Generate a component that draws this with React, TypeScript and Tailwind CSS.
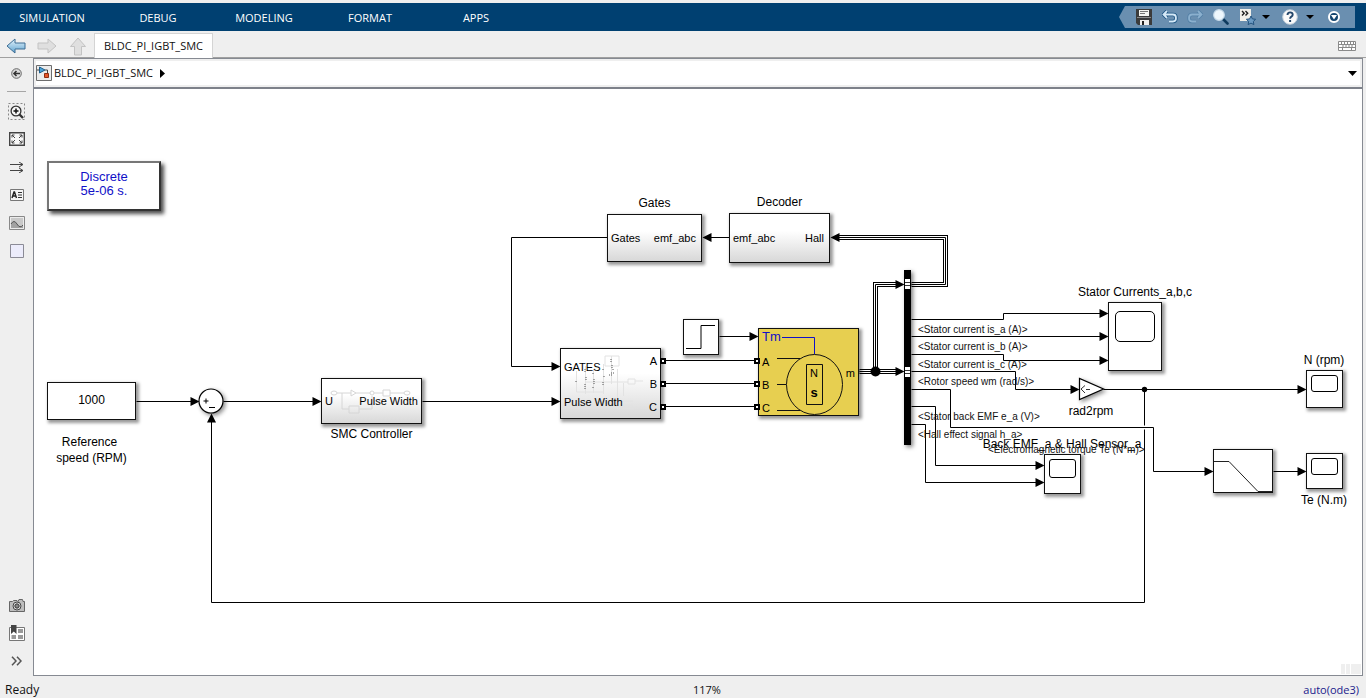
import type { ReactNode } from "react";
import clsx from "clsx";

const MENUS = ["SIMULATION", "DEBUG", "MODELING", "FORMAT", "APPS"];
const MODEL_NAME = "BLDC_PI_IGBT_SMC";

const UI_FONT = "font-['Open_Sans','Noto_Sans',sans-serif]";
const CANVAS_FONT = "font-['Liberation_Sans',Arial,sans-serif]";

type IconButtonProps = {
  label: string;
  className?: string;
  children: ReactNode;
};

function IconButton({ label, className, children }: IconButtonProps) {
  return (
    <button
      type="button"
      aria-label={label}
      className={clsx("flex shrink-0 items-center justify-center", className)}
    >
      {children}
    </button>
  );
}

/* ---------- toolstrip ---------- */

function QuickAccess() {
  return (
    <div className="flex h-[22px] items-center bg-[#6a8fb0] pr-[11px] pl-[13px] [clip-path:polygon(6px_0,100%_0,100%_100%,6px_100%,0_50%)]">
      <IconButton label="Save" className="w-[24px]">
        <svg width="16" height="16" viewBox="0 0 16 16">
          <path d="M0 0h16v16H2l-2-2z" fill="#3b3b3b" />
          <path d="M3 1h10v6H3z" fill="#f4f4f0" />
          <path d="M4 2.500h8M4 4.500h5" stroke="#777" />
          <path d="M1 8.500h14" stroke="#8a8a8a" />
          <path d="M4 11h9v5H4z" fill="#eee" />
          <path d="M6 12h2v4H6z" fill="#222" />
        </svg>
      </IconButton>
      <IconButton label="Undo" className="w-[28px]">
        <svg width="16" height="14" viewBox="0 0 16 14" fill="none">
          <path d="M5 1L1.500 4.500L5 8M2 4.500h9q3 0 3 3.500t-3 3.500H7" stroke="#1f5684" strokeWidth="3.500" />
          <path d="M5 1L1.500 4.500L5 8M2 4.500h9q3 0 3 3.500t-3 3.500H7" stroke="#d5e9f8" strokeWidth="1.800" />
        </svg>
      </IconButton>
      <IconButton label="Redo" className="w-[22px]">
        <svg width="16" height="14" viewBox="0 0 16 14" fill="none">
          <path d="M11 1l3.500 3.500L11 8M14 4.500H5q-3 0-3 3.500t3 3.500h4" stroke="#5480a6" strokeWidth="3.500" />
          <path d="M11 1l3.500 3.500L11 8M14 4.500H5q-3 0-3 3.500t3 3.500h4" stroke="#8bb0ce" strokeWidth="1.800" />
        </svg>
      </IconButton>
      <IconButton label="Find" className="w-[30px]">
        <svg width="16" height="16" viewBox="0 0 16 16">
          <path d="M9.500 9.500l5 5" stroke="#0e3a5e" strokeWidth="2.600" strokeLinecap="round" />
          <circle cx="6" cy="6" r="5.300" fill="#eef7fd" stroke="#c9dcea" strokeWidth="1.200" />
        </svg>
      </IconButton>
      <IconButton label="Favorites" className="w-[22px]">
        <svg width="17" height="16" viewBox="0 0 17 16">
          <path d="M1 0h11v12H1z" fill="#f3f1ea" />
          <path d="M3 2l2.200 2.200L3 6.500M6.500 2l2.200 2.200-2.200 2.300" fill="none" stroke="#222" strokeWidth="1.400" />
          <path d="M12 7l1.400 2.900 3.200.4-2.300 2.200.6 3.100-2.900-1.500-2.900 1.500.6-3.100-2.300-2.200 3.200-.4z" fill="#6c9bc4" stroke="#24547f" />
        </svg>
      </IconButton>
      <IconButton label="Favorites menu" className="w-[16px]">
        <svg width="8" height="4" viewBox="0 0 8 4">
          <path d="M0 0h8L4 4z" />
        </svg>
      </IconButton>
      <IconButton label="Help" className="w-[32px]">
        <svg width="16" height="16" viewBox="0 0 16 16">
          <circle cx="8" cy="8" r="7.300" fill="#fafafa" stroke="#c4d0da" />
          <path d="M5.500 6q0-2.600 2.600-2.600T10.700 5.800q0 1-1.300 1.800T8.100 9.800" fill="none" stroke="#23466a" strokeWidth="1.900" />
          <path d="M7.100 11h2v2h-2z" fill="#23466a" />
        </svg>
      </IconButton>
      <IconButton label="Help menu" className="w-[8px]">
        <svg width="8" height="4" viewBox="0 0 8 4">
          <path d="M0 0h8L4 4z" />
        </svg>
      </IconButton>
      <IconButton label="Minimize toolstrip" className="ml-[10px] w-[20px]">
        <svg width="12" height="12" viewBox="0 0 12 12">
          <circle cx="6" cy="6" r="5" fill="#14456f" stroke="#fff" strokeWidth="2" />
          <path d="M3 4h6L6 8.500z" fill="#fff" />
        </svg>
      </IconButton>
    </div>
  );
}

function Toolstrip() {
  return (
    <header className="flex h-[28px] items-center justify-between bg-[#004071] pr-[11px]">
      <nav className="flex pt-[2px] text-[11px] text-white">
        {MENUS.map((menu) => (
          <button key={menu} type="button" className="w-[106px] pr-[2px] text-center">
            {menu}
          </button>
        ))}
      </nav>
      <QuickAccess />
    </header>
  );
}

/* ---------- tabs and palette ---------- */

function TabBar() {
  return (
    <div className="flex h-[27px] items-end justify-between border-b border-[#a0a0a0]">
      <div className="flex h-full items-end">
        <IconButton label="Back" className="h-[22px] w-[31px]">
          <svg width="20" height="16" viewBox="0 0 20 16">
            <defs>
              <linearGradient id="back" x2="0" y2="1">
                <stop stopColor="#e6f4fc" />
                <stop offset="1" stopColor="#5ea3d0" />
              </linearGradient>
            </defs>
            <path d="M1 8l8-7v4h10v6H9v4z" fill="url(#back)" stroke="#3d6d94" />
          </svg>
        </IconButton>
        <IconButton label="Forward" className="h-[22px] w-[31px]">
          <svg width="20" height="16" viewBox="0 0 20 16">
            <path d="M19 8l-8-7v4H1v6h10v4z" fill="#dfdfdf" stroke="#c3c3c3" />
          </svg>
        </IconButton>
        <IconButton label="Up to parent" className="h-[22px] w-[32px]">
          <svg width="18" height="19" viewBox="0 0 18 19">
            <path d="M9 1l7.500 8.500h-4V18h-7V9.500h-4z" fill="#dfdfdf" stroke="#c3c3c3" />
          </svg>
        </IconButton>
        <button
          type="button"
          className="-mb-px h-[25px] border border-b-0 border-[#d4d4d4] bg-white px-[9px] text-[11px]"
        >
          {MODEL_NAME}
        </button>
      </div>
      <IconButton label="Keyboard shortcuts" className="mr-[10px] mb-[6px]">
        <svg width="18" height="10" viewBox="0 0 18 10" fill="none" stroke="#8a8a8a">
          <path d="M.5.500h17v9H.500z" fill="#fff" />
          <path d="M1 3.500h16M1 6.500h16M3.500 1v2M6.500 1v2M9.500 1v2M12.500 1v2M15.500 1v2M5 4v2M8 4v2M11 4v2M14 4v2M4.500 7v2M13.500 7v2" />
        </svg>
      </IconButton>
    </div>
  );
}

function Palette() {
  return (
    <aside className="flex w-[33px] shrink-0 flex-col items-stretch py-px">
      <IconButton label="Hide browser" className="h-7">
        <svg width="11" height="11" viewBox="0 0 11 11" fill="none">
          <circle cx="5.500" cy="5.500" r="4.800" fill="#ddd" stroke="#666" />
          <path d="M9 5.500H3.500M5.500 3L3 5.500L5.500 8" stroke="#333" strokeWidth="1.600" />
        </svg>
      </IconButton>
      <div className="mx-[7px] mt-1 mb-[5px] h-px bg-[#a6a6a6]" />
      <IconButton label="Zoom" className="h-7">
        <svg width="17" height="17" viewBox="0 0 17 17" fill="none">
          <path d="M.5.500h16v16H.500z" stroke="#888" strokeDasharray="2 2" />
          <path d="M11.500 11.500l3.500 3.500" stroke="#333" strokeWidth="2.400" />
          <circle cx="8" cy="8" r="4.900" fill="#f6f6f6" stroke="#333" strokeWidth="1.300" />
          <path d="M5.500 8h5M8 5.500v5" stroke="#111" strokeWidth="1.500" />
        </svg>
      </IconButton>
      <IconButton label="Fit to view" className="h-7">
        <svg width="16" height="14" viewBox="0 0 16 14" fill="none" stroke="#444">
          <path d="M.7.700h14.600v12.600H.700z" fill="#f8f8f8" strokeWidth="1.400" />
          <path d="M3 5.500V3h2.500M3 3l3 3M10.500 3H13v2.500M13 3l-3 3M3 8.500V11h2.500M3 11l3-3M10.500 11H13V8.500M13 11l-3-3" />
        </svg>
      </IconButton>
      <IconButton label="Sample times" className="h-7">
        <svg width="16" height="11" viewBox="0 0 16 11" fill="none" stroke="#444">
          <path d="M1 2.500h13M1 8.500h13M10 0l4 2.500L10 5M10 6l4 2.500L10 11" />
        </svg>
      </IconButton>
      <IconButton label="Annotation" className="h-7">
        <svg width="14" height="12" viewBox="0 0 14 12" fill="none">
          <path d="M.5.500h13v11H.500z" fill="#f6f6f6" stroke="#777" />
          <path d="M2 9l2-6h.500l2 6M3 7h3" stroke="#222" strokeWidth="1.400" />
          <path d="M8 3.500h4M8 6h4M8 8.500h4" stroke="#333" />
        </svg>
      </IconButton>
      <IconButton label="Image" className="h-7">
        <svg width="16" height="14" viewBox="0 0 16 14" fill="none">
          <path d="M.5.500h15v13H.500z" fill="#ececec" stroke="#888" />
          <path d="M2 2h12v10H2z" fill="#c9c9c9" />
          <path d="M2 8q3-5 6 0t6 1v3H2z" fill="#a2a2a2" />
          <path d="M2 8q3-5 6 0t6 1" stroke="#555" />
        </svg>
      </IconButton>
      <IconButton label="Area" className="h-7">
        <svg width="14" height="14" viewBox="0 0 14 14">
          <path d="M.5.500h13v13H.500z" fill="#ececfb" stroke="#8b8b96" />
        </svg>
      </IconButton>
      <IconButton label="Screenshot" className="mt-auto h-7">
        <svg width="16" height="13" viewBox="0 0 16 13">
          <path d="M.5 2.500h3l1-1h3.500l1 1 1-2h3.500l.5 2h1.500v10H.500z" fill="#bdbdbd" stroke="#666" />
          <circle cx="8" cy="7" r="4" fill="#eee" stroke="#444" />
          <circle cx="8" cy="7" r="2.200" fill="#888" stroke="#333" />
        </svg>
      </IconButton>
      <IconButton label="Model data" className="h-7">
        <svg width="16" height="16" viewBox="0 0 16 16">
          <path d="M.5 2.500h15v13H.500z" fill="#fff" stroke="#777" />
          <path d="M9 4h5v4H9zM2.500 10H7v4H2.500zM9 10h5v4H9z" fill="#999" />
          <path d="M2 0h5.500v9L4.800 6.500 2 9z" fill="#444" />
        </svg>
      </IconButton>
      <IconButton label="More" className="h-7">
        <svg width="11" height="10" viewBox="0 0 11 10" fill="none" stroke="#555" strokeWidth="1.500">
          <path d="M1 .700L5 5L1 9.300M6 .700L10 5L6 9.300" />
        </svg>
      </IconButton>
    </aside>
  );
}

function Breadcrumb() {
  return (
    <div className="flex h-[30px] items-center justify-between border-b-2 border-[#7d818a] pr-[5px] pl-[2px] shadow-[inset_0_0_0_2px_#efefef]">
      <a href="#model" className="flex items-center text-[11px]">
        <svg width="16" height="16" viewBox="0 0 16 16">
          <path d="M.5.500h15v15H.500z" fill="#ececec" stroke="#6d6d6d" />
          <path d="M1 5h3M9 5h2.500v4" fill="none" stroke="#444" />
          <path d="M3.500 2l5.500 3-5.500 3z" fill="#4aa3d9" stroke="#1d5f8d" />
          <path d="M8.500 8.500h4v4h-4z" fill="#e4572a" stroke="#8f2c10" />
        </svg>
        <span className="ml-[2px]">{MODEL_NAME}</span>
        <svg width="5" height="9" viewBox="0 0 5 9" className="ml-[7px]">
          <path d="M0 0l5 4.500L0 9z" />
        </svg>
      </a>
      <IconButton label="Show path list">
        <svg width="9" height="5" viewBox="0 0 9 5">
          <path d="M0 0h9L4.500 5z" />
        </svg>
      </IconButton>
    </div>
  );
}

/* ---------- model canvas ---------- */

type Arrow = { x: number; y: number; dir?: "right" | "left" | "up" };

const WIRES = [
  "M102 312H160",
  "M189 312H281",
  "M388 312H520",
  "M573 148H477V277H520",
  "M695 148H674",
  "M685 247H718",
  "M627 271H724",
  "M627 294H724",
  "M627 317H724",
  "M877 230H969V224H1068",
  "M877 247H1068",
  "M877 265H969V271H1068",
  "M877 282H981V300H1039",
  "M877 300H916V338H1119V382H1173",
  "M877 317H901V376H1004",
  "M877 335H891V393H1004",
  "M1069 300H1266",
  "M1110 300V336M1110 340V513H177V330",
  "M1239 382H1266",
];

const BUSES = ["M877 195H911V148H803", "M841 282V195H864", "M825 282H864"];

const ARROWS: Arrow[] = [
  { x: 165, y: 312 },
  { x: 287, y: 312 },
  { x: 526, y: 312 },
  { x: 526, y: 277 },
  { x: 668, y: 148, dir: "left" },
  { x: 724, y: 247 },
  { x: 796, y: 148, dir: "left" },
  { x: 870, y: 195 },
  { x: 870, y: 282 },
  { x: 1074, y: 224 },
  { x: 1074, y: 247 },
  { x: 1074, y: 271 },
  { x: 1045, y: 300 },
  { x: 1179, y: 382 },
  { x: 1010, y: 376 },
  { x: 1010, y: 393 },
  { x: 1272, y: 300 },
  { x: 1272, y: 382 },
  { x: 177, y: 324, dir: "up" },
];

const PORTS = [271, 294, 317];

function arrowPath({ x, y, dir = "right" }: Arrow) {
  if (dir === "left") return `M${x} ${y}l9 -4.500v9z`;
  if (dir === "up") return `M${x} ${y}l-4.500 9h9z`;
  return `M${x} ${y}l-9 -4.500v9z`;
}

function Wires() {
  return (
    <svg className="absolute inset-0 h-full w-full" fill="none" stroke="#000">
      <g transform="translate(.5 .5)">
        {WIRES.map((d) => (
          <path key={d} d={d} />
        ))}
        {BUSES.map((d) => (
          <g key={d}>
            <path d={d} strokeWidth="5" />
            <path d={d} stroke="#fff" strokeWidth="3" />
            <path d={d} />
          </g>
        ))}
        {ARROWS.map((arrow) => (
          <path key={`${arrow.x}-${arrow.y}`} d={arrowPath(arrow)} fill="#000" stroke="none" />
        ))}
        <circle cx="841" cy="282" r="5" fill="#000" stroke="none" />
        <circle cx="1110" cy="300" r="2.700" fill="#000" stroke="none" />
      </g>
      {/* bus selector */}
      <g className="drop-shadow-[2px_2px_2px_rgba(0,0,0,0.5)]">
        <path d="M870 181h7v175h-7z" fill="#000" stroke="none" />
      </g>
      <path d="M871 190h5v10h-5zM871 278h5v10h-5z" fill="#fff" stroke="none" />
      <path d="M871 193.500h5M871 196.500h5M871 281.500h5M871 284.500h5" stroke="#333" />
      {/* sum */}
      <g className="drop-shadow-[2px_2px_2px_rgba(0,0,0,0.45)]">
        <circle cx="177" cy="312" r="12" fill="#fff" strokeWidth="1.200" />
      </g>
      <path d="M169.500 312h5M172 309.500v5M175 318.500h6" />
      {/* gain */}
      <g className="drop-shadow-[2px_2px_2px_rgba(0,0,0,0.45)]">
        <path d="M1045.500 289.500v21l24-10.500z" fill="#fff" strokeWidth="1.200" />
      </g>
      <path d="M1051 296.500l-4 3.500 4 4M1052 300.500h4" stroke="#333" />
    </svg>
  );
}

type BlockProps = {
  className: string;
  subsystem?: boolean;
  children?: ReactNode;
};

function Block({ className, subsystem, children }: BlockProps) {
  return (
    <div
      className={clsx(
        "absolute border border-[#111] text-[11px] leading-3 shadow-[2px_2px_3px_1px_rgba(0,0,0,0.4)]",
        subsystem && "bg-linear-to-b from-white from-35% to-[#d8d8d8]",
        className,
      )}
    >
      {children}
    </div>
  );
}

function Label({ className, children }: { className: string; children: ReactNode }) {
  return (
    <p className={clsx("absolute text-center text-[12px] leading-[14px] whitespace-nowrap", className)}>
      {children}
    </p>
  );
}

function Signal({ className, children }: { className: string; children: ReactNode }) {
  return (
    <span className={clsx("absolute text-[10px] leading-3 whitespace-nowrap text-[#111]", className)}>
      {children}
    </span>
  );
}

function Scope({ className, screen }: { className: string; screen: string }) {
  return (
    <Block className={clsx("bg-white", className)}>
      <div className={clsx("mx-auto mt-1 border border-black", screen)} />
    </Block>
  );
}

function SmcThumbnail() {
  return (
    <svg className="absolute inset-0" width="99" height="44" fill="none" stroke="#d6d6d6">
      <ellipse cx="12" cy="14" rx="3" ry="2" />
      <path d="M15 14h14M29 11v6l5-3zM34 14h14M52 14h9M61 11h7v6h-7zM68 14h14M20 14v16h7M27 27h10v7H27zM37 30h13V17" />
      <circle cx="50" cy="14" r="2" />
      <ellipse cx="85" cy="14" rx="3" ry="2" />
    </svg>
  );
}

function InverterThumbnail() {
  return (
    <svg className="absolute inset-0" width="99" height="69" fill="none" stroke="#e2e2e2">
      <path d="M15.500 22v21h27M24.500 17v28M32.500 20v24M42.500 15v30M44 7h14v10H44zM50.500 7v28M24 33h36M60 33h7M67 30h7v5h-7zM74 32h8M56.500 20v40h16M62.500 34v13M56 52h16M60 56h12" />
      <path
        d="M24 20v3M25 28v3M24 35v5M32 24v2M33 30v5M32 38v2M42 20v2M43 27v2M42 33v4M50 10v3M51 16v3M50 24h4M48 26h3M52 20v2M15 32v2"
        stroke="#555"
        strokeDasharray="1 1"
      />
    </svg>
  );
}

function Motor() {
  return (
    <Block className="top-[239px] left-[724px] h-[88px] w-[101px] bg-[#e7cf50]">
      <svg className="absolute inset-0" width="99" height="86" fill="none" stroke="#111">
        <path d="M23 8.500h32.500V25" stroke="#1010c8" />
        <ellipse cx="55.500" cy="55.500" rx="28" ry="30" />
        <path d="M47.500 35.500h16v40h-16zM18 29.500h23M18 55.500h9M18 81.500h23" />
      </svg>
      <span className="absolute top-[2px] left-[3px] text-[13px] text-[#1010c8]">Tm</span>
      <span className="absolute top-[27px] left-[3px]">A</span>
      <span className="absolute top-[50px] left-[3px]">B</span>
      <span className="absolute top-[73px] left-[3px]">C</span>
      <span className="absolute top-[38px] left-[47px] w-4 text-center">N</span>
      <span className="absolute top-[58px] left-[47px] w-4 text-center text-[13px] font-bold">s</span>
      <span className="absolute top-[38px] right-[3px]">m</span>
    </Block>
  );
}

function Canvas() {
  return (
    <main className={clsx("relative min-h-[520px] flex-1 overflow-hidden bg-white text-black", CANVAS_FONT)}>
      <Wires />

      <div className="absolute top-[72px] left-[13px] flex h-[50px] w-[114px] items-center justify-center border-2 border-[#777] border-r-[#333] border-b-[#333] bg-white pb-1 text-center text-[13px] leading-[14px] text-[#1010c8] shadow-[3px_3px_4px_0_rgba(0,0,0,0.7)]">
        Discrete
        <br />
        5e-06 s.
      </div>

      <Block className="top-[293px] left-[13px] flex h-[38px] w-[89px] items-center justify-center bg-white pb-[2px]">
        <span className="text-[12px]">1000</span>
      </Block>
      <Label className="top-[346px] left-[11px] w-[89px]">Reference</Label>
      <Label className="top-[362px] left-[13px] w-[89px]">speed (RPM)</Label>

      <Block subsystem className="top-[289px] left-[287px] h-[46px] w-[101px]">
        <SmcThumbnail />
        <span className="absolute top-[16px] left-[3px]">U</span>
        <span className="absolute top-[16px] right-[3px]">Pulse Width</span>
      </Block>
      <Label className="top-[338px] left-[287px] w-[101px]">SMC Controller</Label>

      <Block subsystem className="top-[259px] left-[526px] h-[71px] w-[101px]">
        <InverterThumbnail />
        <span className="absolute top-[12px] left-[3px]">GATES</span>
        <span className="absolute top-[47px] left-[3px]">Pulse Width</span>
        <span className="absolute top-[6px] right-[3px]">A</span>
        <span className="absolute top-[29px] right-[3px]">B</span>
        <span className="absolute top-[52px] right-[3px]">C</span>
      </Block>

      <Label className="top-[107px] left-[573px] w-[95px]">Gates</Label>
      <Block subsystem className="top-[125px] left-[573px] flex h-[48px] w-[95px] items-center justify-between pr-[5px] pb-px pl-[3px]">
        <span>Gates</span>
        <span>emf_abc</span>
      </Block>

      <Label className="top-[106px] left-[695px] w-[101px]">Decoder</Label>
      <Block subsystem className="top-[124px] left-[695px] flex h-[50px] w-[101px] items-center justify-between pr-[5px] pl-[3px]">
        <span>emf_abc</span>
        <span>Hall</span>
      </Block>

      <Block className="top-[230px] left-[649px] h-[36px] w-[36px] bg-white">
        <svg width="34" height="34" fill="none" stroke="#000">
          <path d="M2 28.500h15V5.500h14" />
        </svg>
      </Block>

      <Motor />

      <Label className="top-[196px] left-[1041px] w-[120px]">Stator Currents_a,b,c</Label>
      <Scope className="top-[213px] left-[1074px] h-[69px] w-[54px] pt-1" screen="h-[31px] w-[40px] rounded-[5px]" />
      <Label className="top-[264px] left-[1261px] w-[58px]">N (rpm)</Label>
      <Scope className="top-[281px] left-[1272px] h-[38px] w-[37px]" screen="h-[17px] w-[27px] rounded-[3px]" />
      <Scope className="top-[364px] left-[1272px] h-[36px] w-[37px]" screen="h-[17px] w-[27px] rounded-[3px]" />
      <Label className="top-[404px] left-[1261px] w-[58px]">Te (N.m)</Label>
      <Label className="top-[315px] left-[1027px] w-[60px]">rad2rpm</Label>

      <Block className="top-[360px] left-[1179px] h-[44px] w-[60px] bg-white">
        <svg width="58" height="42" fill="none" stroke="#222">
          <path d="M0 11.500h15L44 41.500h14" />
        </svg>
      </Block>

      <Scope className="top-[365px] left-[1010px] h-[40px] w-[37px]" screen="h-[19px] w-[27px] rounded-[3px]" />
      <Label className="top-[348px] left-[948px] w-[160px]">Back EMF_a &amp; Hall Sensor_a</Label>

      <Signal className="top-[235px] left-[884px]">&lt;Stator current is_a (A)&gt;</Signal>
      <Signal className="top-[252px] left-[884px]">&lt;Stator current is_b (A)&gt;</Signal>
      <Signal className="top-[270px] left-[884px]">&lt;Stator current is_c (A)&gt;</Signal>
      <Signal className="top-[287px] left-[884px]">&lt;Rotor speed wm (rad/s)&gt;</Signal>
      <Signal className="top-[322px] left-[884px]">&lt;Stator back EMF e_a (V)&gt;</Signal>
      <Signal className="top-[340px] left-[884px]">&lt;Hall effect signal h_a&gt;</Signal>
      <Signal className="top-[355px] left-[954px]">&lt;Electromagnetic torque Te (N*m)&gt;</Signal>

      {/* physical ports between inverter and motor */}
      <svg className="absolute inset-0 h-full w-full" fill="#fff" stroke="#000" strokeWidth="2">
        {PORTS.map((y) => (
          <g key={y}>
            <rect x="627" y={y - 1} width="4" height="4" />
            <rect x="721" y={y - 1} width="4" height="4" />
          </g>
        ))}
      </svg>

      <div className="absolute right-[1px] bottom-[1px] flex gap-px">
        <div className="h-[10px] w-1 bg-[#efefef]" />
        <div className="h-[10px] w-1 bg-[#efefef]" />
        <div className="h-[10px] w-[10px] bg-[#efefef]" />
      </div>
    </main>
  );
}

function StatusBar() {
  return (
    <footer className="grid h-[22px] grid-cols-3 items-center pt-[5px] pr-[7px] pl-[5px] text-[12px]">
      <span>Ready</span>
      <span className="justify-self-center pl-[50px] text-[11px]">117%</span>
      <a href="#solver" className="justify-self-end text-[11px] text-[#1a1a8c]">
        auto(ode3)
      </a>
    </footer>
  );
}

export default function App() {
  return (
    <div className={clsx("flex min-h-screen flex-col bg-[#efefef] pt-[3px] text-[#111]", UI_FONT)}>
      <Toolstrip />
      <TabBar />
      <div className="flex flex-1">
        <Palette />
        <div className="mr-[3px] flex min-w-0 flex-1 flex-col border border-[#868a92] bg-white">
          <Breadcrumb />
          <Canvas />
        </div>
      </div>
      <StatusBar />
    </div>
  );
}
